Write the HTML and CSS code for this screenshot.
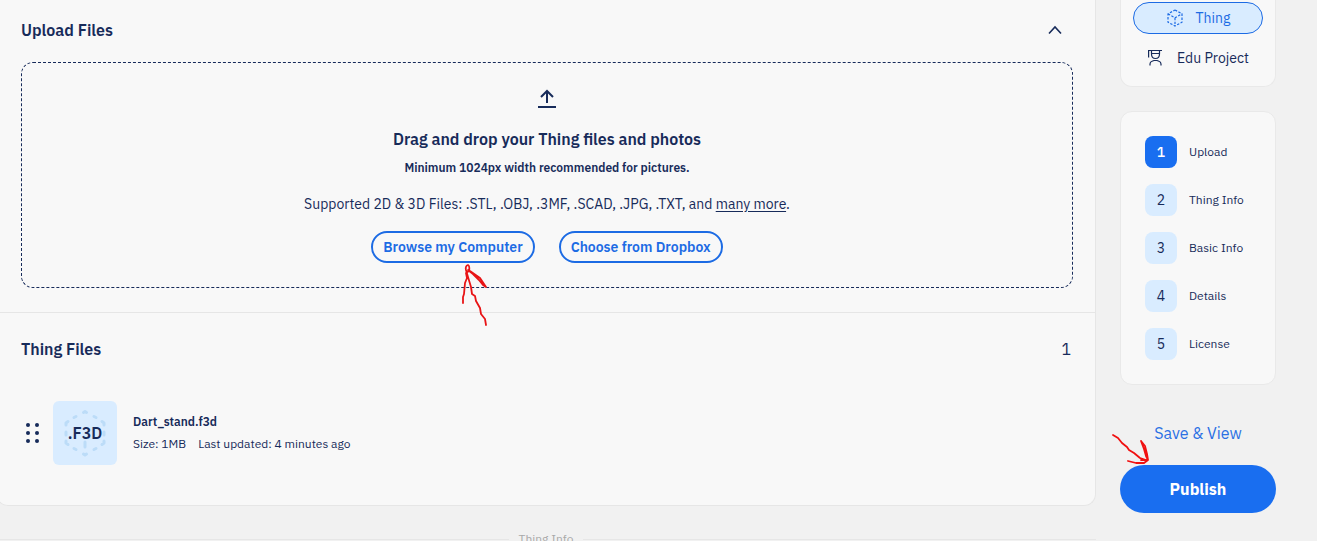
FILE: index.html
```html
<!DOCTYPE html>
<html lang="en">
<head>
<meta charset="utf-8">
<title>Upload Thing</title>
<link rel="stylesheet" href="styles.css">
</head>
<body>
<div class="page">
  <main class="main">
    <div class="panel">
      <section class="upload">
        <div class="section-head">
          <h2 class="title">Upload Files</h2>
          <button class="collapse" type="button" aria-label="Collapse">
            <svg width="16" height="16" viewBox="0 0 16 16" fill="none" stroke="currentColor" stroke-width="1.6"><path d="M2 11.500L8 5L14 11.500"/></svg>
          </button>
        </div>
        <div class="dropzone">
          <svg class="upload-icon" width="20" height="20" viewBox="0 0 20 20" fill="none" stroke="currentColor" stroke-width="2"><path d="M10 14V2M4 8L10 2L16 8M1 18H19"/></svg>
          <h3 class="title drop-title">Drag and drop your Thing files and photos</h3>
          <p class="drop-hint">Minimum 1024px width recommended for pictures.</p>
          <p class="drop-types">Supported 2D &amp; 3D Files: .STL, .OBJ, .3MF, .SCAD, .JPG, .TXT, and <a class="more" href="#">many more</a>.</p>
          <div class="drop-actions">
            <div class="marked">
              <button class="outline-btn" type="button">Browse my Computer</button>
              <svg class="mark mark-browse" width="32" height="66" viewBox="0 0 32 66" fill="none" stroke="#e81416" stroke-width="1.8" stroke-linecap="round" stroke-linejoin="round" aria-hidden="true"><path d="M25 62L24 56L20 51L19 45L15 38L14 33L11 31L10 24L7 14L5 7Q4 3 7 2Q9 3 8 8L5 10L6 15L4 20L3 31L2 34V40M7 7L12 11L18 17L22 22L25 24L19 15L9 8"/></svg>
            </div>
            <button class="outline-btn" type="button">Choose from Dropbox</button>
          </div>
        </div>
      </section>
      <section class="files">
        <div class="files-head">
          <h2 class="title">Thing Files</h2>
          <span class="count">1</span>
        </div>
        <div class="file">
          <svg class="grip" width="14" height="20" viewBox="0 0 14 20" fill="currentColor"><circle cx="2" cy="2" r="2"/><circle cx="11" cy="2" r="2"/><circle cx="2" cy="10" r="2"/><circle cx="11" cy="10" r="2"/><circle cx="2" cy="18" r="2"/><circle cx="11" cy="18" r="2"/></svg>
          <div class="thumb">
            <svg class="thumb-art" width="44" height="48" viewBox="0 0 44 48" fill="none" stroke="#bcdcf8" stroke-width="3" stroke-linecap="round" stroke-linejoin="round"><path d="M20.500 3.500L22 2.500L23.500 3.500M31 7.500L33 8.500M39 12.500L41 14V16M41 23V26M41 32V34L39 35.500M33 39.500L31 40.500M23.500 45L22 46L20.500 45M13 40.500L11 39.500M5 35.500L3 34V32M3 26V23M3 16V14L5 12.500M11 8.500L13 7.500M22 33V38"/></svg>
            <span class="thumb-ext">.F3D</span>
          </div>
          <div class="file-info">
            <div class="file-name">Dart_stand.f3d</div>
            <div class="file-meta"><span>Size: 1MB</span><span>Last updated: 4 minutes ago</span></div>
          </div>
        </div>
      </section>
    </div>
    <div class="separator"><span>Thing Info</span></div>
  </main>
  <aside class="sidebar">
    <div class="card types">
      <button class="type type-active" type="button">
        <svg width="18" height="18" viewBox="0 0 18 18" fill="none" stroke="currentColor" stroke-width="1.2" stroke-dasharray="2.4 1.5"><path d="M9 1L16 4.800V13.200L9 17L2 13.200V4.800L9 1M2 4.800L9 8.800L16 4.800M9 8.800V17"/></svg>
        <span>Thing</span>
      </button>
      <button class="type" type="button">
        <svg width="18" height="18" viewBox="0 0 18 18" fill="none" stroke="currentColor" stroke-width="1.2"><path d="M1 1.500H15M1.600 1.500V8.500M4.500 2V5Q4.500 9.500 8.500 9.500Q12.500 9.500 12.500 5V2M4.500 4.500H12.500M3 16.500V15Q3 13 5 12.300L7 11.500H10L12 12.300Q14 13 14 15V16.500"/></svg>
        <span>Edu Project</span>
      </button>
    </div>
    <nav class="card steps">
      <a class="step step-active" href="#"><span class="num">1</span><span>Upload</span></a>
      <a class="step" href="#"><span class="num">2</span><span>Thing Info</span></a>
      <a class="step" href="#"><span class="num">3</span><span>Basic Info</span></a>
      <a class="step" href="#"><span class="num">4</span><span>Details</span></a>
      <a class="step" href="#"><span class="num">5</span><span>License</span></a>
    </nav>
    <div class="actions">
      <a class="save" href="#">Save &amp; View</a>
      <div class="marked">
        <button class="publish" type="button">Publish</button>
        <svg class="mark mark-publish" width="40" height="34" viewBox="0 0 40 34" fill="none" stroke="#f01010" stroke-width="1.8" stroke-linecap="round" stroke-linejoin="round" aria-hidden="true"><path d="M2 2L7 5L11 10L16 14L18 17L23 20L29 25L35 27M30 8L34 13L36 21L37 27L35 23L33 16L30 8M17 28L25 30L33 30L37 27L30 27"/></svg>
      </div>
    </div>
  </aside>
</div>
</body>
</html>
```
FILE: styles.css
```css
* {
  box-sizing: border-box;
}

body {
  margin: 0;
  height: 100vh;
  overflow: hidden;
  background: #f1f1f1;
  color: #172b5a;
  font-family: "IBM Plex Sans", Roboto, "Liberation Sans", sans-serif;
  font-size: 14px;
  line-height: 20px;
}

h2, h3, p {
  margin: 0;
}

button {
  font: inherit;
  color: inherit;
  background: none;
  border: 0;
  padding: 0;
  cursor: pointer;
}

a {
  color: inherit;
  text-decoration: none;
}

svg {
  display: block;
  flex: none;
}

.page {
  display: grid;
  grid-template-columns: minmax(0, 1fr) 156px;
  column-gap: 24px;
  padding-right: 41px;
}

.main {
  margin-left: -4px;
}

.panel {
  background: #f8f8f8;
  border: 1px solid #e6e6e6;
  border-top: 0;
  border-radius: 0 0 12px 12px;
}

.title {
  font-size: 16px;
  font-weight: 600;
  line-height: 24px;
}

.upload {
  padding: 18px 22px 24px 24px;
  border-bottom: 1px solid #e6e6e6;
}

.section-head,
.files-head {
  display: flex;
  align-items: center;
  justify-content: space-between;
}

.collapse {
  margin-right: 10px;
}

.dropzone {
  margin-top: 20px;
  padding: 26px 16px 24px;
  display: flex;
  flex-direction: column;
  align-items: center;
  text-align: center;
  border: 1px dashed #172b5a;
  border-radius: 12px;
}

.drop-title {
  margin-top: 18px;
}

.drop-hint {
  margin-top: 8px;
  font-size: 12px;
  font-weight: 600;
  line-height: 18px;
}

.drop-types {
  margin-top: 16px;
  line-height: 22px;
}

.more {
  text-decoration: underline;
  text-underline-offset: 2px;
}

.drop-actions {
  display: flex;
  gap: 24px;
  margin-top: 16px;
}

.outline-btn {
  height: 32px;
  padding: 0 10px;
  color: #1c6be4;
  font-weight: 600;
  border: 2px solid #1c6be4;
  border-radius: 16px;
}

.marked {
  position: relative;
}

.mark {
  position: absolute;
  pointer-events: none;
}

.mark-browse {
  top: 32px;
  left: 90px;
}

.mark-publish {
  top: -32px;
  left: -9px;
}

.files {
  padding: 24px 24px 40px;
}

.count {
  font-size: 16px;
}

.file {
  display: flex;
  align-items: center;
  margin-top: 40px;
  padding-left: 5px;
}

.thumb {
  display: grid;
  place-items: center;
  width: 64px;
  height: 64px;
  margin: 0 16px 0 13px;
  background: #d9ecff;
  border-radius: 6px;
}

.thumb-art,
.thumb-ext {
  grid-area: 1 / 1;
}

.thumb-ext {
  font-size: 16px;
  font-weight: 600;
}

.file-info {
  font-size: 12px;
  line-height: 22px;
}

.file-name {
  font-weight: 600;
}

.file-meta {
  display: flex;
  gap: 12px;
}

.separator {
  display: flex;
  align-items: center;
  gap: 10px;
  margin-top: 25px;
  color: #a9a9a9;
  font-size: 12px;
  line-height: 16px;
}

.separator::before,
.separator::after {
  content: "";
  flex: 1;
  height: 1px;
  background: #e6e6e6;
}

.card {
  background: #f8f8f8;
  border: 1px solid #e9e9e9;
  border-radius: 12px;
}

.types {
  display: grid;
  gap: 8px;
  padding: 2px 12px 12px;
  border-top: 0;
  border-radius: 0 0 12px 12px;
}

.type {
  display: flex;
  align-items: center;
  justify-content: center;
  gap: 12px;
  height: 32px;
  border-radius: 16px;
}

.type-active {
  color: #1c6be4;
  background: #d9ecff;
  border: 1px solid #1c6be4;
}

.steps {
  display: grid;
  gap: 16px;
  margin-top: 24px;
  padding: 24px;
}

.step {
  display: flex;
  align-items: center;
  gap: 12px;
  font-size: 12px;
  white-space: nowrap;
}

.num {
  width: 32px;
  height: 32px;
  line-height: 32px;
  font-size: 14px;
  text-align: center;
  background: #d9ecff;
  border-radius: 8px;
}

.step-active .num {
  color: #fff;
  background: #196ef0;
  font-weight: 500;
}

.actions {
  display: grid;
  gap: 16px;
  margin-top: 32px;
}

.save {
  color: #2b70e4;
  font-size: 16px;
  line-height: 32px;
  text-align: center;
}

.publish {
  display: block;
  width: 100%;
  height: 48px;
  color: #fff;
  background: #196ef0;
  font-size: 16px;
  font-weight: 700;
  border-radius: 24px;
}
```
